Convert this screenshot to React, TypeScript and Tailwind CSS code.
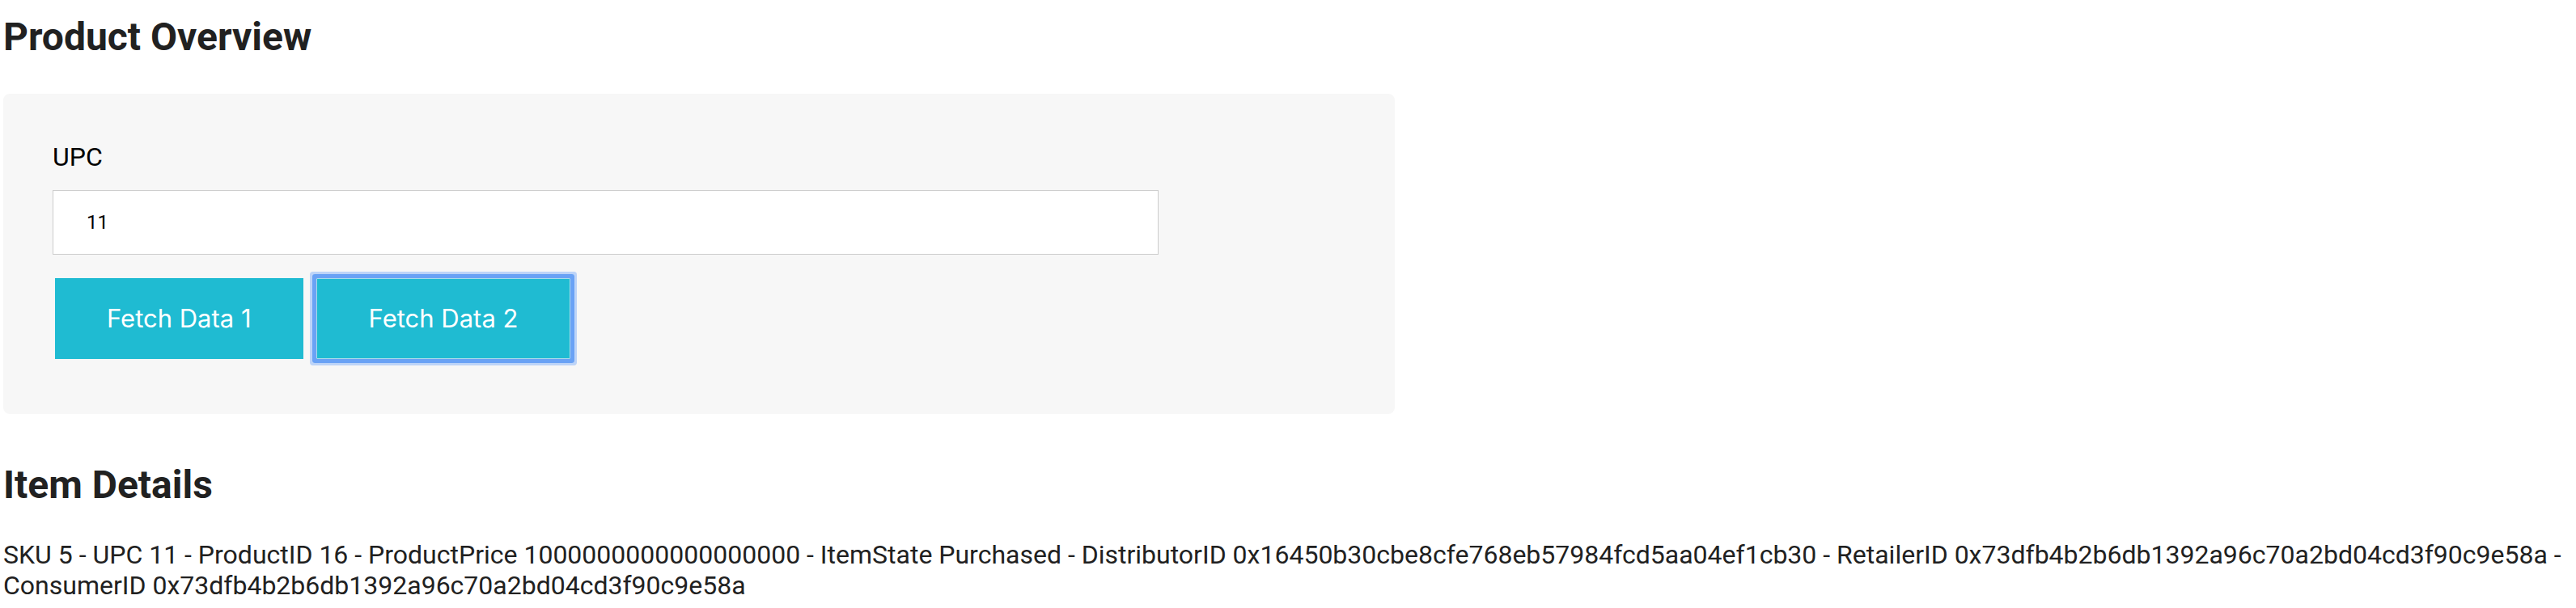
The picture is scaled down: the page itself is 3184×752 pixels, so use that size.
export default function App() {
  return (
    <div className="min-h-screen bg-white px-1 text-[#212121] [font-family:Roboto,'Liberation_Sans',sans-serif]">
      <h2 className="pt-[18px] text-[48px] font-bold leading-[1.172]">Product Overview</h2>

      <div className="mt-[42px] w-[1720px] rounded-lg bg-[#f7f7f7] pt-[60px] pb-[68px] pl-[61px]">
        <label className="block text-[32px] leading-[1.172] text-black">UPC</label>
        <input
          className="mt-[21px] block h-[80px] w-[1367px] border border-[#cccccc] bg-white pl-[41px] text-[24px] text-black outline-none"
          value="11"
          readOnly
        />
        <div className="mt-[29px] flex gap-4 pl-[3px] [font-family:Inter,'Noto_Sans',sans-serif]">
          <button className="h-[100px] bg-[#1fbbd2] px-16 text-[31px] text-white">Fetch Data 1</button>
          <button className="h-[100px] rounded-[1px] border border-[#a9dbe9] bg-[#1fbbd2] px-16 text-[31px] text-white shadow-[0_0_0_5px_#6aa2f5,0_0_0_8px_#bdd4f8]">
            Fetch Data 2
          </button>
        </div>
      </div>

      <h2 className="mt-[60px] text-[48px] font-bold leading-[1.172]">Item Details</h2>
      <p className="mt-[40px] text-[32px] leading-[1.172]">
        SKU 5 - UPC 11 - ProductID 16 - ProductPrice 1000000000000000000 - ItemState Purchased - DistributorID
        0x16450b30cbe8cfe768eb57984fcd5aa04ef1cb30 - RetailerID 0x73dfb4b2b6db1392a96c70a2bd04cd3f90c9e58a - ConsumerID
        0x73dfb4b2b6db1392a96c70a2bd04cd3f90c9e58a
      </p>
    </div>
  )
}
